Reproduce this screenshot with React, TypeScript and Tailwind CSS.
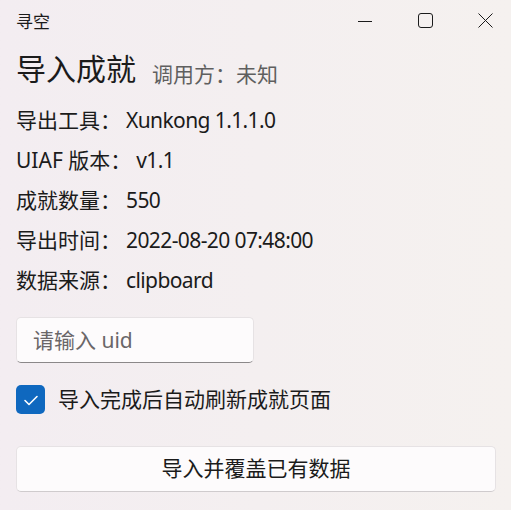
export default function App() {
  const rows: [string, string][] = [
    ['导出工具：', 'Xunkong 1.1.1.0'],
    ['UIAF 版本：', 'v1.1'],
    ['成就数量：', '550'],
    ['导出时间：', '2022-08-20 07:48:00'],
    ['数据来源：', 'clipboard'],
  ];

  return (
    <div
      className="w-[511px] h-[510px] overflow-hidden bg-gradient-to-r from-[#f3edf1] to-[#f5f1ef] text-[#1b1b1b]"
      style={{ fontFamily: '"Segoe UI", "Noto Sans", "Noto Sans CJK SC", sans-serif' }}
    >
      {/* Title bar */}
      <div className="h-10 flex items-center justify-between">
        <span className="pl-4 text-[17px] leading-none mt-[2px]">寻空</span>
        <div className="flex h-full -mr-1">
          <TitleButton>
            <svg width="14" height="14" viewBox="0 0 14 14">
              <path d="M0 7.5h14" stroke="#1b1b1b" strokeWidth="1" />
            </svg>
          </TitleButton>
          <TitleButton>
            <svg width="15" height="15" viewBox="0 0 15 15">
              <rect x="0.5" y="0.5" width="14" height="14" rx="2.5" fill="none" stroke="#1b1b1b" strokeWidth="1" />
            </svg>
          </TitleButton>
          <TitleButton>
            <svg width="15" height="15" viewBox="0 0 15 15">
              <path d="M0.5 0.5l14 14M14.5 0.5l-14 14" stroke="#1b1b1b" strokeWidth="1" />
            </svg>
          </TitleButton>
        </div>
      </div>

      <div className="px-4">
        {/* Heading */}
        <div className="h-[60px] flex items-center">
          <h1 className="text-[30px] leading-none font-normal mt-[-2px]">导入成就</h1>
          <span className="ml-4 text-[21px] leading-none text-[#5f5f5f] mt-[8px]">调用方：未知</span>
        </div>

        {/* Info rows */}
        {rows.map(([label, value]) => (
          <div key={label} className="h-10 flex items-center text-[21px] leading-none">
            <span>{label}</span>
            <span className="ml-[5px] tracking-[-0.6px]">{value}</span>
          </div>
        ))}

        {/* uid input */}
        <input
          type="text"
          placeholder="请输入 uid"
          className="mt-[17px] block w-[238px] h-[46px] px-4 rounded-[5px] bg-[#fdfbfc] border border-[#e6e2e4] border-b-[#8b8889] text-[21px] placeholder-[#6a6668] focus:outline-none"
        />

        {/* checkbox */}
        <label className="mt-[22px] flex items-center h-[29px]">
          <span className="w-[29px] h-[29px] rounded-[5px] bg-[#0f68bf] flex items-center justify-center">
            <svg width="18" height="18" viewBox="0 0 18 18">
              <path d="M3 9.5l4 4 8-8" fill="none" stroke="#fff" strokeWidth="1.6" strokeLinecap="round" strokeLinejoin="round" />
            </svg>
          </span>
          <span className="ml-[13px] text-[21px] leading-none">导入完成后自动刷新成就页面</span>
        </label>

        {/* action button */}
        <button className="mt-8 w-[480px] h-[46px] rounded-[5px] bg-[#fdfbfc] border border-[#e6e2e4] border-b-[#cfcbcd] text-[21px] text-[#1b1b1b]">
          导入并覆盖已有数据
        </button>
      </div>
    </div>
  );
}

function TitleButton({ children }: { children: React.ReactNode }) {
  return <div className="w-[60px] h-full flex items-center justify-center pt-[1px]">{children}</div>;
}
